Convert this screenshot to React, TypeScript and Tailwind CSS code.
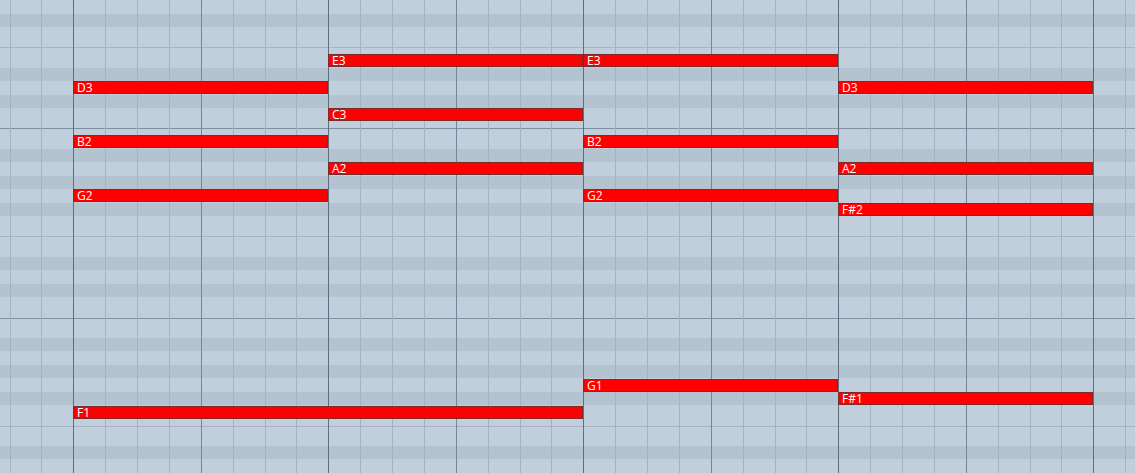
import React from "react";

const ROW_H = 13.5;
const ROWS = 35;
const DARK_ROWS = [1, 5, 7, 11, 13, 15, 19, 21, 25, 27, 29, 33];
const BEAT = 31.875;
const ORIGIN = 73.3;

// horizontal separators: y, strong?
const H_LINES: [number, boolean][] = [
  [47, false],
  [128, true],
  [236, false],
  [318, true],
  [426, false],
];

const NOTES = [
  { label: "E3", top: 54, x: 328, w: 255 },
  { label: "E3", top: 54, x: 583, w: 255 },
  { label: "D3", top: 81, x: 73, w: 255 },
  { label: "D3", top: 81, x: 838, w: 255 },
  { label: "C3", top: 108, x: 328, w: 255 },
  { label: "B2", top: 135, x: 73, w: 255 },
  { label: "B2", top: 135, x: 583, w: 255 },
  { label: "A2", top: 162, x: 328, w: 255 },
  { label: "A2", top: 162, x: 838, w: 255 },
  { label: "G2", top: 189, x: 73, w: 255 },
  { label: "G2", top: 189, x: 583, w: 255 },
  { label: "F#2", top: 203, x: 838, w: 255 },
  { label: "G1", top: 379, x: 583, w: 255 },
  { label: "F#1", top: 392, x: 838, w: 255 },
  { label: "F1", top: 406, x: 73, w: 510 },
];

function GridRows() {
  return (
    <div className="flex flex-col">
      {Array.from({ length: ROWS }).map((_, i) => (
        <div
          key={i}
          className={DARK_ROWS.includes(i) ? "h-[13.5px] bg-[#b4c3d0]" : "h-[13.5px] bg-[#c1cfdc]"}
        />
      ))}
    </div>
  );
}

function VerticalLines() {
  const lines = [];
  for (let k = -2; k < 34; k++) {
    const x = Math.round(ORIGIN + k * BEAT);
    const mod = ((k % 8) + 8) % 8;
    let cls = "bg-[#a4b3c1]";
    if (mod === 0) cls = "bg-[#5c6e80]";
    else if (mod === 4) cls = "bg-[#73869a]";
    lines.push(
      <div key={k} className={`absolute top-0 bottom-0 w-px ${cls}`} style={{ left: x }} />
    );
  }
  return <>{lines}</>;
}

export default function App() {
  return (
    <div className="relative w-[1135px] h-[473px] overflow-hidden bg-[#c1cfdc] font-['Open_Sans','Noto_Sans',sans-serif]">
      <GridRows />

      {H_LINES.map(([y, strong]) => (
        <div
          key={y}
          className={`absolute left-0 right-0 h-px ${strong ? "bg-[#7f91a3]" : "bg-[#a6b5c3]"}`}
          style={{ top: y }}
        />
      ))}

      <VerticalLines />

      {NOTES.map((n, i) => (
        <div
          key={i}
          className="absolute h-[13px] bg-[#ff0000] border border-[#7d2a2a] flex items-center pl-[3px] pt-px text-white text-[12px] leading-none"
          style={{ top: n.top, left: n.x, width: n.w }}
        >
          {n.label}
        </div>
      ))}
    </div>
  );
}
